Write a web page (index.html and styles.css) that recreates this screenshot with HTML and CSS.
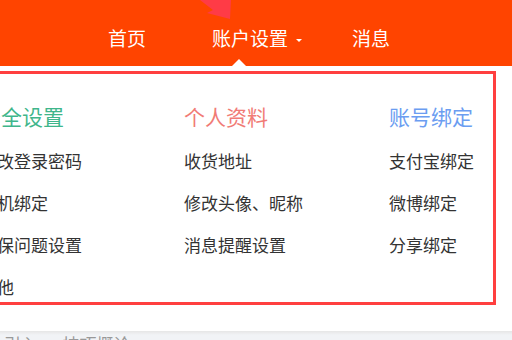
FILE: index.html
```html
<!DOCTYPE html>
<html lang="zh-CN">
<head>
  <meta charset="UTF-8">
  <meta name="viewport" content="width=device-width, initial-scale=1.0">
  <title>账户设置</title>
  <link rel="stylesheet" href="styles.css">
</head>
<body>
  <header class="topbar">
    <svg class="deco" width="40" height="22" viewBox="0 0 40 22">
      <polygon points="2,0 33,0 32,19 9,13 15,10" fill="#ff3b46"/>
    </svg>
    <ul class="nav">
      <li class="nav-home">首页</li>
      <li class="nav-account">账户设置<span class="caret"></span></li>
      <li class="nav-msg">消息</li>
    </ul>
    <span class="pointer"></span>
  </header>

  <div class="dropdown">
    <div class="menu-col">
      <h3 class="col-title green">安全设置</h3>
      <ul>
        <li>修改登录密码</li>
        <li>手机绑定</li>
        <li>密保问题设置</li>
        <li>其他</li>
      </ul>
    </div>
    <div class="menu-col">
      <h3 class="col-title pink">个人资料</h3>
      <ul>
        <li>收货地址</li>
        <li>修改头像、昵称</li>
        <li>消息提醒设置</li>
      </ul>
    </div>
    <div class="menu-col">
      <h3 class="col-title blue">账号绑定</h3>
      <ul>
        <li>支付宝绑定</li>
        <li>微博绑定</li>
        <li>分享绑定</li>
      </ul>
    </div>
  </div>

  <div class="strip">
    <span>引入 · 技巧概论</span>
  </div>
</body>
</html>
```

FILE: styles.css
```css
body {
  margin: 0;
  padding: 0;
  background: #fff;
  font-family: "Noto Sans CJK SC", "Noto Sans", sans-serif;
  overflow: hidden;
}
ul {
  list-style: none;
  margin: 0;
  padding: 0;
}

/* top bar */
.topbar {
  position: relative;
  height: 66px;
  background: #ff4400;
  color: #fff;
}
.deco {
  position: absolute;
  left: 198px;
  top: 0;
}
.nav {
  display: flex;
  padding: 26px 0 0 108px;
  font-size: 19px;
  line-height: 24px;
}
.nav-account {
  margin-left: 66px;
}
.nav-msg {
  margin-left: 50px;
}
.caret {
  display: inline-block;
  margin-left: 8px;
  vertical-align: middle;
  border-left: 3px solid transparent;
  border-right: 3px solid transparent;
  border-top: 3px solid #fff;
}
.pointer {
  position: absolute;
  left: 232px;
  bottom: 0;
  border-left: 7px solid transparent;
  border-right: 7px solid transparent;
  border-bottom: 7px solid #fff;
}

/* dropdown */
.dropdown {
  display: grid;
  grid-template-columns: 204px 205px auto;
  box-sizing: border-box;
  height: 234px;
  margin: 5px 16px 0 -50px;
  padding: 0 0 0 27px;
  border: 3px solid #ff3f3f;
  background: #fff;
}
.col-title {
  margin: 28px 0 10px;
  font-size: 21px;
  font-weight: normal;
  line-height: 28px;
}
.green { color: #3fb68b; }
.pink { color: #f17b76; }
.blue { color: #6b9df1; }
.menu-col li {
  font-size: 17px;
  line-height: 42px;
  color: #333;
}

/* page behind */
.strip {
  margin-top: 26px;
  height: 20px;
  padding-left: 4px;
  background: linear-gradient(#e6e6e6, #f1f3f6 4px);
  color: #999;
  font-size: 17px;
  line-height: 22px;
  padding-top: 2px;
}
```
